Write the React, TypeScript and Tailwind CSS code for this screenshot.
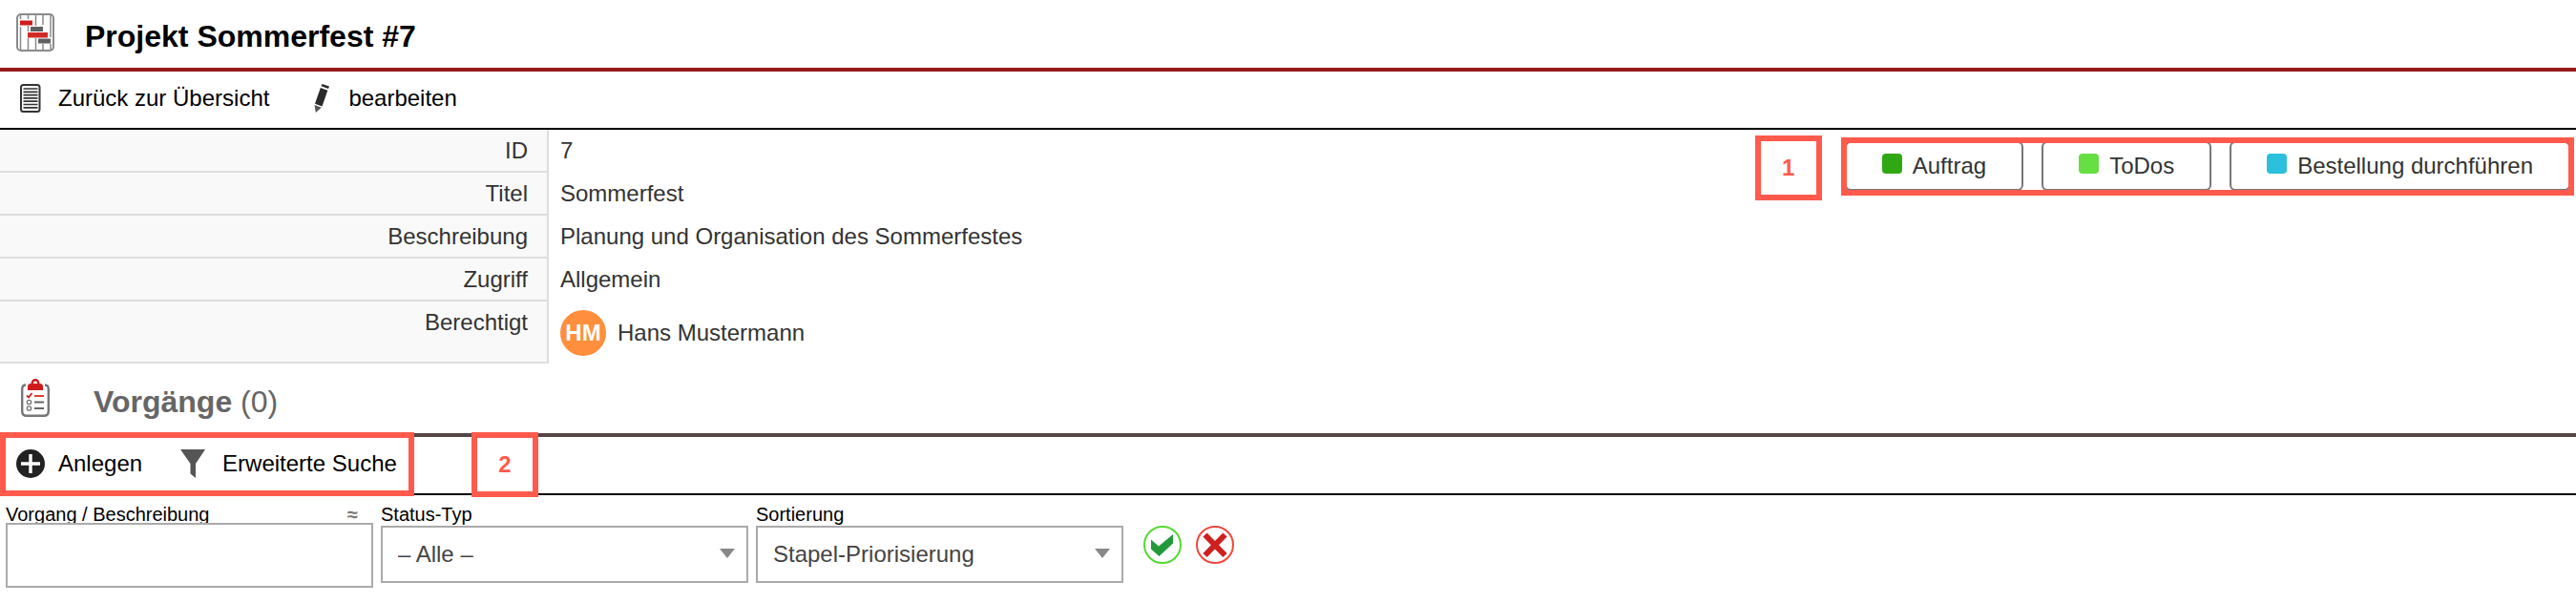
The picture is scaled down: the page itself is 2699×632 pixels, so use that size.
import type { ReactNode } from 'react'

const details = [
  { label: 'ID', value: '7' },
  { label: 'Titel', value: 'Sommerfest' },
  { label: 'Beschreibung', value: 'Planung und Organisation des Sommerfestes' },
  { label: 'Zugriff', value: 'Allgemein' },
]

const actions = [
  { label: 'Auftrag', color: 'bg-[#2fa814]' },
  { label: 'ToDos', color: 'bg-[#66df42]' },
  { label: 'Bestellung durchführen', color: 'bg-[#2bc0dc]' },
]

function ProjectIcon() {
  return (
    <svg width="40" height="40" viewBox="0 0 40 40" fill="none" aria-hidden="true">
      <rect x="1" y="1" width="38" height="38" rx="4" stroke="#8a8a8a" strokeWidth="2" />
      <path d="M4.500 2v4M4.500 14v24M12.500 2v4M12.500 13v6M12.500 26v12M20.500 2v11M20.500 26v12M28 2v10M28 32v6M36 2v23M36 32v6" stroke="#8a8a8a" strokeWidth="1.500" />
      <rect x="4" y="7.500" width="13" height="5" fill="#d01c1c" />
      <rect x="15" y="14" width="13" height="5" fill="#606060" />
      <rect x="12" y="20" width="21" height="5.500" fill="#d02a26" />
      <rect x="23" y="26.500" width="13" height="5" fill="#606060" />
    </svg>
  )
}

function ListIcon() {
  return (
    <svg width="22" height="30" viewBox="0 0 22 30" fill="none" aria-hidden="true">
      <rect x="1" y="1" width="19.500" height="28" rx="2.500" stroke="#333" strokeWidth="2" />
      <path d="M3.500 5h15M3.500 8.300h15M3.500 11.600h15M3.500 14.900h15M3.500 18.200h15M3.500 21.500h15M3.500 24.800h15" stroke="#333" strokeWidth="1.700" />
    </svg>
  )
}

function PencilIcon() {
  return (
    <svg width="16" height="30" viewBox="0 0 16 30" fill="#2b2b2b" aria-hidden="true">
      <path d="M8.500 0L16 2.500L15 5L7.500 2.200Z" />
      <path d="M6.800 4L14.300 6.800L8.500 23.500L1 20.700Z" />
      <path d="M0.500 22L7.800 24.800L1.800 30Z" fill="#555" />
    </svg>
  )
}

function ClipboardIcon() {
  return (
    <svg width="30" height="40" viewBox="0 0 30 40" fill="none" aria-hidden="true">
      <path d="M5 6.500Q1.200 6.500 1.200 11V34Q1.200 38.800 6 38.800H24Q28.800 38.800 28.800 34V11Q28.800 6.500 25 6.500" stroke="#777" strokeWidth="2.400" />
      <path d="M7 12V8Q7 5 10.500 5Q11 0 15 0Q19 0 19.500 5Q23 5 23 8V12Z" fill="#cf1b1b" />
      <path d="M12.800 5Q13 2.600 15 2.600Q17 2.600 17.200 5Z" fill="#fff" />
      <path d="M6 17.500L8 19.500L11.500 15" stroke="#cf1b1b" strokeWidth="1.800" />
      <path d="M14 18H24" stroke="#e04030" strokeWidth="2" />
      <circle cx="8.500" cy="24.500" r="2.200" stroke="#777" strokeWidth="1.300" />
      <circle cx="8.500" cy="31" r="2.200" stroke="#777" strokeWidth="1.300" />
      <path d="M14 24.500H24M14 31H24" stroke="#666" strokeWidth="1.800" />
    </svg>
  )
}

function PlusIcon() {
  return (
    <svg width="30" height="30" viewBox="0 0 30 30" aria-hidden="true">
      <circle cx="15" cy="15" r="15" fill="#222" />
      <path d="M15 5V25M5 15H25" stroke="#fff" strokeWidth="3.400" />
    </svg>
  )
}

function FunnelIcon() {
  return (
    <svg width="26" height="30" viewBox="0 0 26 30" fill="#555" aria-hidden="true">
      <path d="M0 0H26L16 15V30L10.500 25.500V15Z" />
    </svg>
  )
}

function CheckIcon() {
  return (
    <svg width="40" height="40" viewBox="0 0 40 40" aria-hidden="true">
      <circle cx="20" cy="20" r="19" fill="#fff" stroke="#55d932" strokeWidth="2" />
      <path d="M8 14.500L16 21.500L31 9V18.500L16.500 32L8 24.500Z" fill="#229a3c" />
    </svg>
  )
}

function CrossIcon() {
  return (
    <svg width="40" height="40" viewBox="0 0 40 40" aria-hidden="true">
      <circle cx="20" cy="20" r="19" fill="#fff" stroke="#f2473c" strokeWidth="2" />
      <path d="M9.500 9.500L30.500 31M30.500 9.500L9.500 31" stroke="#cf2020" strokeWidth="6" />
    </svg>
  )
}

function Toolbar({ children }: { children: ReactNode }) {
  return (
    <div className="relative border-b-2 border-black pb-1">
      <nav className="flex h-[55px] items-center text-black">{children}</nav>
    </div>
  )
}

function Marker({ children }: { children: ReactNode }) {
  return (
    <div className="flex h-[68px] w-[70px] items-center justify-center border-[6px] border-[#ff5a4c] bg-white font-bold text-[#ff5a4c]">
      {children}
    </div>
  )
}

function SelectField({ id, label, value }: { id: string; label: string; value: string }) {
  return (
    <div className="w-[385px]">
      <label htmlFor={id} className="block pt-2 text-[20px] leading-6 text-black">
        {label}
      </label>
      <div className="relative">
        <select
          id={id}
          className="block h-[60px] w-full appearance-none border-2 border-[#aaa] bg-white px-4 text-[#444]"
        >
          <option>{value}</option>
        </select>
        <svg
          width="16"
          height="10"
          viewBox="0 0 16 10"
          className="pointer-events-none absolute top-6 right-[14px]"
          aria-hidden="true"
        >
          <path d="M0 0H16L8 10Z" fill="#888" />
        </svg>
      </div>
    </div>
  )
}

export default function App() {
  return (
    <main className="overflow-hidden bg-white font-['Liberation_Sans',Arial,sans-serif] text-[24px] text-[#333]">
      {/* Projekt */}
      <header className="flex h-[75px] items-start gap-8 border-b-4 border-[#981b1b] pt-[14px] pl-[17px]">
        <ProjectIcon />
        <h1 className="pt-1 text-[32px] leading-10 font-bold text-black">Projekt Sommerfest #7</h1>
      </header>

      <Toolbar>
        <a href="#uebersicht" className="flex items-center gap-[18px] pl-[21px]">
          <ListIcon />
          Zurück zur Übersicht
        </a>
        <a href="#bearbeiten" className="flex items-center gap-5 pl-[47px]">
          <PencilIcon />
          bearbeiten
        </a>
      </Toolbar>

      <section className="flex items-start justify-between">
        <table className="border-separate border-spacing-0 text-left leading-[43px]">
          <tbody>
            {details.map((row) => (
              <tr key={row.label}>
                <th
                  scope="row"
                  className="w-[575px] border-r-2 border-b-2 border-[#ddd] bg-[#f9f9f9] p-0 pr-5 text-right font-normal"
                >
                  {row.label}
                </th>
                <td className="p-0 pl-3 align-top">{row.value}</td>
              </tr>
            ))}
            <tr>
              <th
                scope="row"
                className="h-[65px] w-[575px] border-r-2 border-b-2 border-[#ddd] bg-[#f9f9f9] p-0 pr-5 text-right align-top font-normal"
              >
                Berechtigt
              </th>
              <td className="p-0 pl-3">
                <div className="flex items-center gap-3">
                  <span className="flex size-12 items-center justify-center rounded-full bg-[#ff8f3c] font-bold text-white">
                    HM
                  </span>
                  Hans Mustermann
                </div>
              </td>
            </tr>
          </tbody>
        </table>

        <div className="flex items-start gap-5 pt-[6px] pr-[2px]">
          <Marker>1</Marker>
          <div className="relative flex gap-[19px] px-1 pt-[6px]">
            {actions.map((action) => (
              <button
                key={action.label}
                type="button"
                className="flex h-[52px] items-baseline gap-[11px] rounded-md border-2 border-[#777] bg-white px-[37px] leading-[48px]"
              >
                <span className={`inline-block size-[21px] rounded ${action.color}`} />
                {action.label}
              </button>
            ))}
            <div className="pointer-events-none absolute inset-x-0 top-[2px] h-[61px] border-[6px] border-[#ff5a4c]" />
          </div>
        </div>
      </section>

      {/* Vorgänge */}
      <header className="flex h-[77px] items-start gap-[46px] border-b-4 border-[#554646] pt-4 pl-[22px]">
        <ClipboardIcon />
        <h2 className="pt-1 text-[32px] leading-10 text-[#666]">
          <b>Vorgänge</b> (0)
        </h2>
      </header>

      <Toolbar>
        <a href="#anlegen" className="flex items-center gap-[14px] pl-[17px]">
          <PlusIcon />
          Anlegen
        </a>
        <a href="#suche" className="flex items-center gap-[18px] pl-10">
          <FunnelIcon />
          Erweiterte Suche
        </a>
        <div className="pointer-events-none absolute -top-[5px] left-0 h-[67px] w-[434px] border-[6px] border-[#ff5a4c]" />
        <div className="absolute -top-[5px] left-[494px]">
          <Marker>2</Marker>
        </div>
      </Toolbar>

      <form className="flex items-start gap-2 pl-[6px]" onSubmit={(e) => e.preventDefault()}>
        <div className="w-[385px]">
          <div className="flex justify-between pt-2 pr-4 text-[20px] leading-6 text-black">
            <label htmlFor="vorgang">Vorgang / Beschreibung</label>
            <span className="font-bold text-[#777]">≈</span>
          </div>
          <input
            id="vorgang"
            type="text"
            className="relative -mt-[3px] block h-[68px] w-full border-2 border-[#aaa] bg-white px-4"
          />
        </div>
        <SelectField id="status" label="Status-Typ" value="– Alle –" />
        <SelectField id="sortierung" label="Sortierung" value="Stapel-Priorisierung" />
        <div className="flex gap-[15px] pt-8 pl-[13px]">
          <button type="submit" aria-label="Suchen">
            <CheckIcon />
          </button>
          <button type="reset" aria-label="Zurücksetzen">
            <CrossIcon />
          </button>
        </div>
      </form>
    </main>
  )
}
